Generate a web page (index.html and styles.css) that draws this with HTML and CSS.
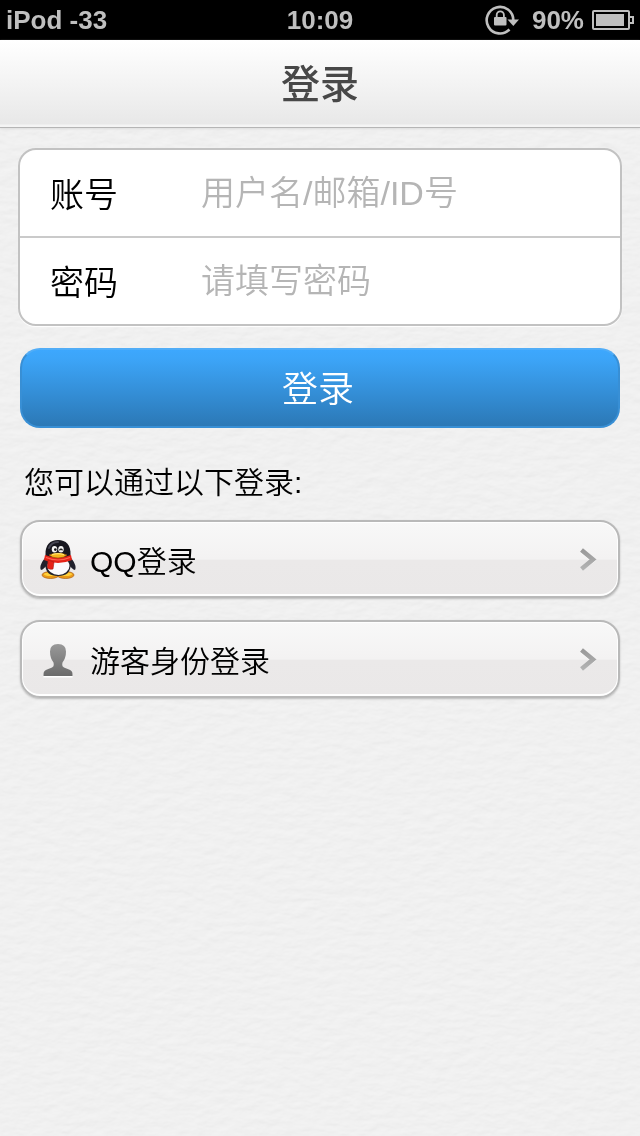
FILE: index.html
```html
<!DOCTYPE html>
<html lang="zh-CN">
<head>
<meta charset="utf-8">
<meta name="viewport" content="width=device-width, initial-scale=1">
<title>登录</title>
<link rel="stylesheet" href="styles.css">
</head>
<body>
<svg class="paper" aria-hidden="true">
  <filter id="grain" x="0" y="0" width="100%" height="100%" color-interpolation-filters="sRGB">
    <feTurbulence type="fractalNoise" baseFrequency="0.06 0.12" numOctaves="3" seed="4" result="noise"/>
    <feDiffuseLighting in="noise" surfaceScale="0.6" diffuseConstant="1.07" lighting-color="#f1f1f1">
      <feDistantLight azimuth="250" elevation="68"/>
    </feDiffuseLighting>
  </filter>
  <rect width="100%" height="100%" filter="url(#grain)"/>
</svg>
<div class="status-bar">
  <span class="device">iPod -33</span>
  <span class="clock">10:09</span>
  <span class="indicators">
    <svg class="lock-icon" width="36" height="32" viewBox="0 0 36 32" aria-hidden="true">
      <path d="M25.500 25.500A13.300 13.300 0 1 1 29.300 16" fill="none" stroke="#bfbfbf" stroke-width="2.600"/>
      <path d="M23.500 15.500H35L29.300 22Z" fill="#bfbfbf"/>
      <path d="M12.700 14V11a3.600 3.600 0 0 1 7.200 0V14" fill="none" stroke="#bfbfbf" stroke-width="1.800"/>
      <rect x="10" y="13" width="12.500" height="8.500" rx="1" fill="#bfbfbf"/>
    </svg>
    <span class="charge">90%</span>
    <svg class="battery-icon" width="42" height="20" viewBox="0 0 42 20" aria-hidden="true">
      <rect x="1" y="1" width="36" height="18" rx="1" fill="none" stroke="#bfbfbf" stroke-width="2"/>
      <path d="M38 7H41V13H38" fill="none" stroke="#bfbfbf" stroke-width="2"/>
      <rect x="4" y="4" width="28" height="12" fill="#bfbfbf"/>
    </svg>
  </span>
</div>
<header class="title-bar"><h1>登录</h1></header>
<main class="content">
  <form class="login-form">
    <div class="fields">
      <div class="field">
        <label for="account">账号</label>
        <input id="account" type="text" placeholder="用户名/邮箱/ID号">
      </div>
      <div class="field">
        <label for="password">密码</label>
        <input id="password" type="password" placeholder="请填写密码">
      </div>
    </div>
    <button class="submit" type="submit">登录</button>
  </form>
  <p class="hint">您可以通过以下登录:</p>
  <nav class="options">
    <a class="option" href="#qq">
      <svg class="option-icon" width="40" height="40" viewBox="0 0 40 40" aria-hidden="true">
        <ellipse cx="12.500" cy="36" rx="8.500" ry="3.500" fill="#eb9a18" stroke="#a85d12" stroke-width=".7"/>
        <ellipse cx="27.500" cy="36" rx="8.500" ry="3.500" fill="#eb9a18" stroke="#a85d12" stroke-width=".7"/>
        <ellipse cx="12" cy="35.300" rx="6" ry="1.800" fill="#ffd13b"/>
        <ellipse cx="28" cy="35.300" rx="6" ry="1.800" fill="#ffd13b"/>
        <path d="M8 18C4 22 1 28 3 31C5 31 7 28 9 26ZM32 18C36 22 39 28 37 31C35 31 33 28 31 26Z" fill="#20202b"/>
        <path d="M7 23C7 34 12 37 20 37S33 34 33 23L31 17H9Z" fill="#22222c"/>
        <ellipse cx="20.500" cy="27" rx="11" ry="9" fill="#fbfbfd"/>
        <path d="M7.500 16C7 6 12 1 20 1S33 6 32.500 16C32 23 8 23 7.500 16Z" fill="#17171f"/>
        <path d="M11 9C13 4 17 3 20 3" fill="none" stroke="#464653" stroke-width="2" stroke-linecap="round"/>
        <ellipse cx="16.500" cy="10.300" rx="2.700" ry="3.300" fill="#f4f4f4"/>
        <ellipse cx="23" cy="10.300" rx="2.700" ry="3.300" fill="#f4f4f4"/>
        <circle cx="17.300" cy="10.600" r="1.300" fill="#111"/>
        <path d="M21.500 11.300Q23 9 24.500 11.300" fill="none" stroke="#111" stroke-width="1.200"/>
        <path d="M7 16Q20 21 33 16L34 21Q20 27 6 21Z" fill="#e52318"/>
        <path d="M10 21L16 23L15 30Q12 31 9.500 29Z" fill="#e52318" stroke="#a91812" stroke-width=".6"/>
        <path d="M8 18.500Q20 23.500 32 18.500" fill="none" stroke="#ff6550" stroke-width="1.100"/>
        <path d="M11 16Q20 12 29 16Q26 19 20 19T11 16Z" fill="#f7b51b" stroke="#8c4d0d" stroke-width=".6"/>
        <path d="M14 15.700Q20 13.700 26 15.700" fill="none" stroke="#ffe56b" stroke-width="1.200"/>
      </svg>
      <span class="option-name">QQ登录</span>
      <svg class="arrow" width="20" height="24" viewBox="0 0 20 24" aria-hidden="true">
        <path d="M1.500 4L13 13.500L1.500 22" fill="none" stroke="#fff" stroke-width="4"/>
        <path d="M1.500 3L13 12.500L1.500 22" fill="none" stroke="url(#arrow-fill)" stroke-width="4.500"/>
      </svg>
    </a>
    <a class="option" href="#guest">
      <svg class="option-icon" width="40" height="40" viewBox="0 0 40 40" aria-hidden="true">
        <defs>
          <linearGradient id="person-fill" x2="0" y2="1"><stop stop-color="#999"/><stop offset="1" stop-color="#6b6b6b"/></linearGradient>
          <linearGradient id="arrow-fill" gradientUnits="userSpaceOnUse" x1="0" y1="0" x2="0" y2="24"><stop stop-color="#969696"/><stop offset="1" stop-color="#b5b5b5"/></linearGradient>
        </defs>
        <path d="M5.500 38.500V36Q5.500 32 9 31L15.500 28V24H24.500V28L31 31Q34.500 32 34.500 36V38.500Z" fill="#fff"/>
        <path d="M5.500 37V35Q5.500 31.500 9 30.500L14 28.500Q16 27.500 15.700 25.500L15.500 23.500Q12 19 12 12.500Q12 5 20 5T28 12.500Q28 19 24.500 23.500L24.300 25.500Q24 27.500 26 28.500L31 30.500Q34.500 31.500 34.500 35V37Z" fill="url(#person-fill)"/>
      </svg>
      <span class="option-name">游客身份登录</span>
      <svg class="arrow" width="20" height="24" viewBox="0 0 20 24" aria-hidden="true">
        <path d="M1.500 4L13 13.500L1.500 22" fill="none" stroke="#fff" stroke-width="4"/>
        <path d="M1.500 3L13 12.500L1.500 22" fill="none" stroke="url(#arrow-fill)" stroke-width="4.500"/>
      </svg>
    </a>
  </nav>
</main>
</body>
</html>
```
FILE: styles.css
```css
* { box-sizing: border-box; }

body {
  margin: 0;
  min-height: 100vh;
  background: #f1f1f1;
  color: #000;
  font-family: "Liberation Sans", "Noto Sans CJK SC", sans-serif;
  font-weight: 350;
}

.paper {
  position: fixed;
  inset: 0;
  z-index: -1;
  width: 100%;
  height: 100%;
  opacity: 0.25;
}

.status-bar {
  display: grid;
  grid-template-columns: 1fr auto 1fr;
  align-items: center;
  height: 40px;
  padding: 0 6px;
  background: #000;
  color: #bfbfbf;
  font-size: 26px;
  font-weight: bold;
  line-height: 40px;
}

.indicators {
  display: flex;
  align-items: center;
  justify-content: flex-end;
}

.charge { margin: 0 8px 0 12px; }

.title-bar {
  height: 88px;
  padding-top: 2px;
  border-bottom: 1px solid #b5b5b5;
  background: linear-gradient(#fff, #e8e8e8 84px, #f4f4f4 85px);
  box-shadow: 0 1px 2px #dedede;
  text-align: center;
}

.title-bar h1 {
  margin: 0;
  color: #484848;
  font-size: 39px;
  font-weight: 500;
  line-height: 86px;
}

.content { padding: 20px 18px; }

.fields {
  border: 2px solid #c2c2c2;
  border-radius: 18px;
  background: #fff;
  box-shadow: 0 1px 1px #fff;
  overflow: hidden;
}

.field {
  display: flex;
  align-items: center;
  height: 86px;
  padding: 0 30px;
  font-size: 34px;
}

.field + .field {
  height: 88px;
  border-top: 2px solid #cacaca;
}

.field label {
  flex: 0 0 151px;
  padding-bottom: 2px;
}

.field input {
  flex: 1;
  min-width: 0;
  height: 60px;
  padding: 0;
  border: 0;
  outline: 0;
  background: none;
  color: #000;
  font: inherit;
}

.field input::placeholder {
  color: #b5b5b5;
  opacity: 1;
}

.submit {
  display: block;
  width: calc(100% - 4px);
  height: 80px;
  margin: 22px 2px 0;
  padding: 0 4px 4px 0;
  border: 2px solid #388fd5;
  border-top-color: #51adf7;
  border-radius: 20px;
  background: linear-gradient(#3da8ff, #3ca4f7 15%, #2b77b4) border-box;
  color: #fff;
  font: inherit;
  font-size: 36px;
}

.hint {
  margin: 34px 6px 16px;
  font-size: 30px;
  line-height: 42px;
}

.options {
  display: grid;
  gap: 22px;
  margin: 0 2px;
}

.option {
  display: flex;
  align-items: center;
  height: 78px;
  padding: 0 18px 0 16px;
  border: 2px solid #b9b9b9;
  border-radius: 20px;
  background: linear-gradient(#f8f8f8, #f3f2f2 50%, #ebe9e9 52%, #eae8e8);
  box-shadow: inset 0 -2px 0 #fff, inset 0 0 0 1px #fff, 0 1px 2px #bbb;
  color: #000;
  font-size: 30px;
  text-decoration: none;
}

.option-name {
  flex: 1;
  margin-left: 12px;
  padding-top: 6px;
  line-height: 42px;
}
```
